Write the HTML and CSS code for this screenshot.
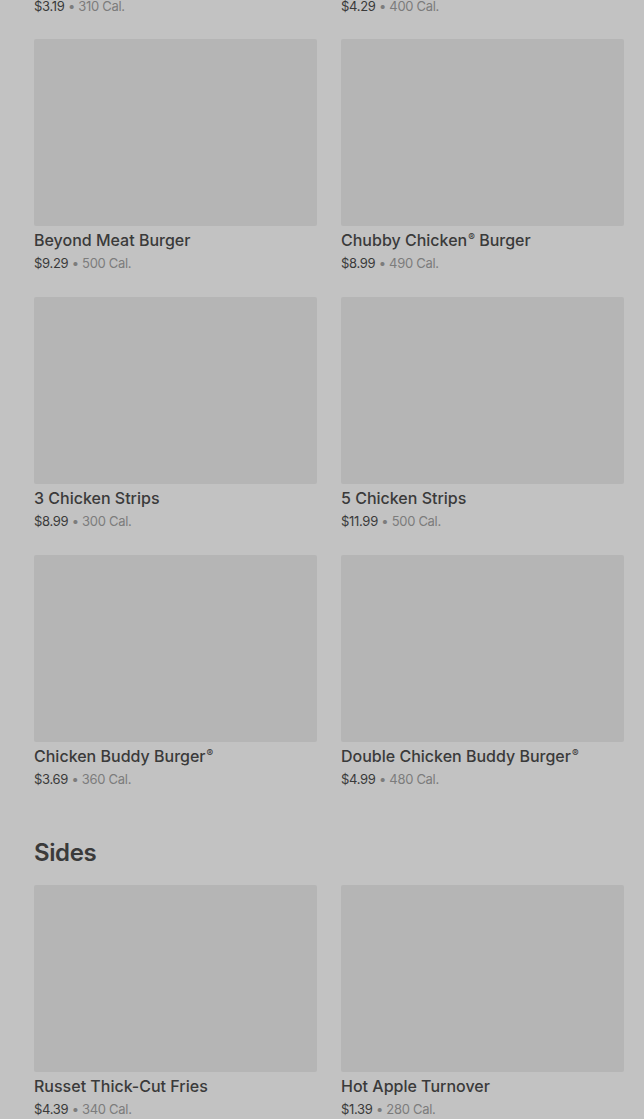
FILE: index.html
```html
<!DOCTYPE html>
<html>
<head>
<meta charset="utf-8">
<link rel="stylesheet" href="styles.css">
</head>
<body>
<main class="page">
  <div class="grid grid-clipped">
    <div class="meta"><span class="price">$3.19</span> • <span class="cal">310 Cal.</span></div>
    <div class="meta"><span class="price">$4.29</span> • <span class="cal">400 Cal.</span></div>
  </div>
  <div class="grid">
    <div class="card"><div class="thumb"></div><div class="name">Beyond Meat Burger</div><div class="meta"><span class="price">$9.29</span> • <span class="cal">500 Cal.</span></div></div>
    <div class="card"><div class="thumb"></div><div class="name">Chubby Chicken<span class="reg">®</span> Burger</div><div class="meta"><span class="price">$8.99</span> • <span class="cal">490 Cal.</span></div></div>
    <div class="card"><div class="thumb"></div><div class="name">3 Chicken Strips</div><div class="meta"><span class="price">$8.99</span> • <span class="cal">300 Cal.</span></div></div>
    <div class="card"><div class="thumb"></div><div class="name">5 Chicken Strips</div><div class="meta"><span class="price">$11.99</span> • <span class="cal">500 Cal.</span></div></div>
    <div class="card"><div class="thumb"></div><div class="name">Chicken Buddy Burger<span class="reg">®</span></div><div class="meta"><span class="price">$3.69</span> • <span class="cal">360 Cal.</span></div></div>
    <div class="card"><div class="thumb"></div><div class="name">Double Chicken Buddy Burger<span class="reg">®</span></div><div class="meta"><span class="price">$4.99</span> • <span class="cal">480 Cal.</span></div></div>
  </div>
  <h2 class="section-title">Sides</h2>
  <div class="grid">
    <div class="card"><div class="thumb"></div><div class="name">Russet Thick-Cut Fries</div><div class="meta"><span class="price">$4.39</span> • <span class="cal">340 Cal.</span></div></div>
    <div class="card"><div class="thumb"></div><div class="name">Hot Apple Turnover</div><div class="meta"><span class="price">$1.39</span> • <span class="cal">280 Cal.</span></div></div>
  </div>
</main>
</body>
</html>
```

FILE: styles.css
```css
html, body {
  margin: 0;
  padding: 0;
  background: #c2c2c2;
  height: 100%;
  overflow: hidden;
}
.page {
  padding: 0 20px 0 34px;
  font-family: Inter, "Noto Sans", sans-serif;
  color: #3b3b3b;
}
.grid {
  display: grid;
  grid-template-columns: 283px 283px;
  column-gap: 24px;
  row-gap: 24px;
}
.grid-clipped {
  margin-bottom: 27px;
}
.grid-clipped .meta {
  line-height: 12px;
  margin-top: 0;
}
.card {
  display: flex;
  flex-direction: column;
}
.thumb {
  height: 187px;
  background: #b5b5b5;
  border-radius: 2px;
}
.name {
  margin-top: 4px;
  font-size: 16px;
  line-height: 20px;
  font-weight: 500;
  color: #3a3a3a;
}
.reg {
  font-size: 10px;
  vertical-align: top;
  line-height: 14px;
  margin-left: 1px;
}
.meta {
  margin-top: 3px;
  font-size: 13px;
  line-height: 20px;
  letter-spacing: -0.3px;
  color: #7c7c7c;
}
.price {
  color: #3a3a3a;
}
.cal {
  color: #7c7c7c;
}
.section-title {
  margin: 48px 0 16px;
  font-size: 24px;
  line-height: 32px;
  font-weight: 600;
  letter-spacing: -0.4px;
  color: #3a3a3a;
}
```
